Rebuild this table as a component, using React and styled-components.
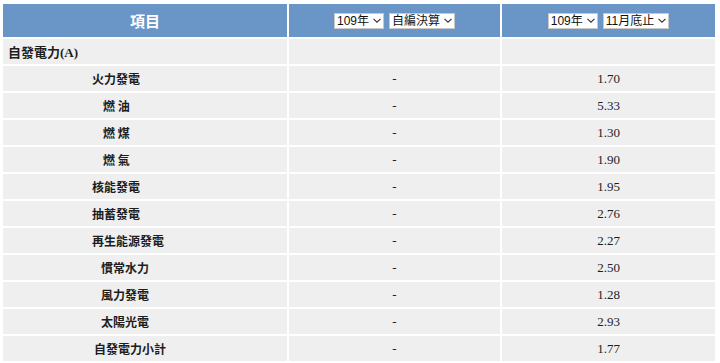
import styled, { createGlobalStyle } from "styled-components";

const GlobalStyle = createGlobalStyle`
  body {
    margin: 0;
    background: #ffffff;
    font-family: "Liberation Sans", "Noto Sans CJK TC", sans-serif;
  }
`;

const Table = styled.table`
  width: 716px;
  margin: 2px 1px;
  border-collapse: separate;
  border-spacing: 2px;
  table-layout: fixed;
`;

const HeadCell = styled.th`
  height: 33px;
  padding: 0;
  background: #6995c7;
  color: #ffffff;
  font-family: "Noto Sans CJK TC", sans-serif;
  font-size: 15px;
  font-weight: bold;
  text-align: center;
  vertical-align: middle;
`;

const SelectRow = styled.div`
  display: flex;
  justify-content: center;
  gap: 5px;
`;

const FakeSelect = styled.span`
  display: inline-flex;
  align-items: center;
  gap: 4px;
  box-sizing: border-box;
  height: 16px;
  padding: 0 2px 0 2px;
  background: #ffffff;
  border: 1px solid #c8c8c8;
  color: #111111;
  font-family: "Liberation Sans", "Noto Sans CJK TC", sans-serif;
  font-size: 12px;
  font-weight: normal;
  line-height: 14px;
  white-space: nowrap;
`;

const Chevron = styled.svg`
  width: 8px;
  height: 5px;
  flex: none;
`;

const Cell = styled.td`
  height: 25px;
  padding: 0;
  background: #efefef;
  color: #1d1d1d;
  vertical-align: middle;
`;

const Label = styled(Cell)`
  font-family: "Noto Sans CJK TC", sans-serif;
  font-size: ${(p) => (p.$main ? 13 : 12)}px;
  font-weight: bold;
  padding-left: ${(p) => p.$indent}px;
  white-space: pre;
`;

const Latin = styled.span`
  font-family: "Liberation Serif", serif;
  font-weight: bold;
`;

const Value = styled(Cell)`
  font-family: "Liberation Serif", serif;
  font-size: 13px;
  text-align: center;
`;

const Select = ({ children }) => (
  <FakeSelect>
    {children}
    <Chevron viewBox="0 0 8 5">
      <path d="M0.5 0.8 L4 4.2 L7.5 0.8" fill="none" stroke="#333" strokeWidth="1.1" />
    </Chevron>
  </FakeSelect>
);

const rows = [
  { name: "火力發電", indent: 89, value: "1.70" },
  { name: "燃 油", indent: 100, value: "5.33" },
  { name: "燃 煤", indent: 100, value: "1.30" },
  { name: "燃 氣", indent: 100, value: "1.90" },
  { name: "核能發電", indent: 89, value: "1.95" },
  { name: "抽蓄發電", indent: 89, value: "2.76" },
  { name: "再生能源發電", indent: 89, value: "2.27" },
  { name: "慣常水力", indent: 98, value: "2.50" },
  { name: "風力發電", indent: 98, value: "1.28" },
  { name: "太陽光電", indent: 98, value: "2.93" },
  { name: "自發電力小計", indent: 91, value: "1.77" },
];

function App() {
  return (
    <>
      <GlobalStyle />
      <Table>
        <colgroup>
          <col style={{ width: 284 }} />
          <col style={{ width: 211 }} />
          <col style={{ width: 213 }} />
        </colgroup>
        <thead>
          <tr>
            <HeadCell>項目</HeadCell>
            <HeadCell>
              <SelectRow>
                <Select>109年</Select>
                <Select>自編決算</Select>
              </SelectRow>
            </HeadCell>
            <HeadCell>
              <SelectRow>
                <Select>109年</Select>
                <Select>11月底止</Select>
              </SelectRow>
            </HeadCell>
          </tr>
        </thead>
        <tbody>
          <tr>
            <Label $main $indent={5}>
              自發電力<Latin>(A)</Latin>
            </Label>
            <Value />
            <Value />
          </tr>
          {rows.map((r) => (
            <tr key={r.name}>
              <Label $indent={r.indent}>{r.name}</Label>
              <Value>-</Value>
              <Value>{r.value}</Value>
            </tr>
          ))}
        </tbody>
      </Table>
    </>
  );
}

export default App;
